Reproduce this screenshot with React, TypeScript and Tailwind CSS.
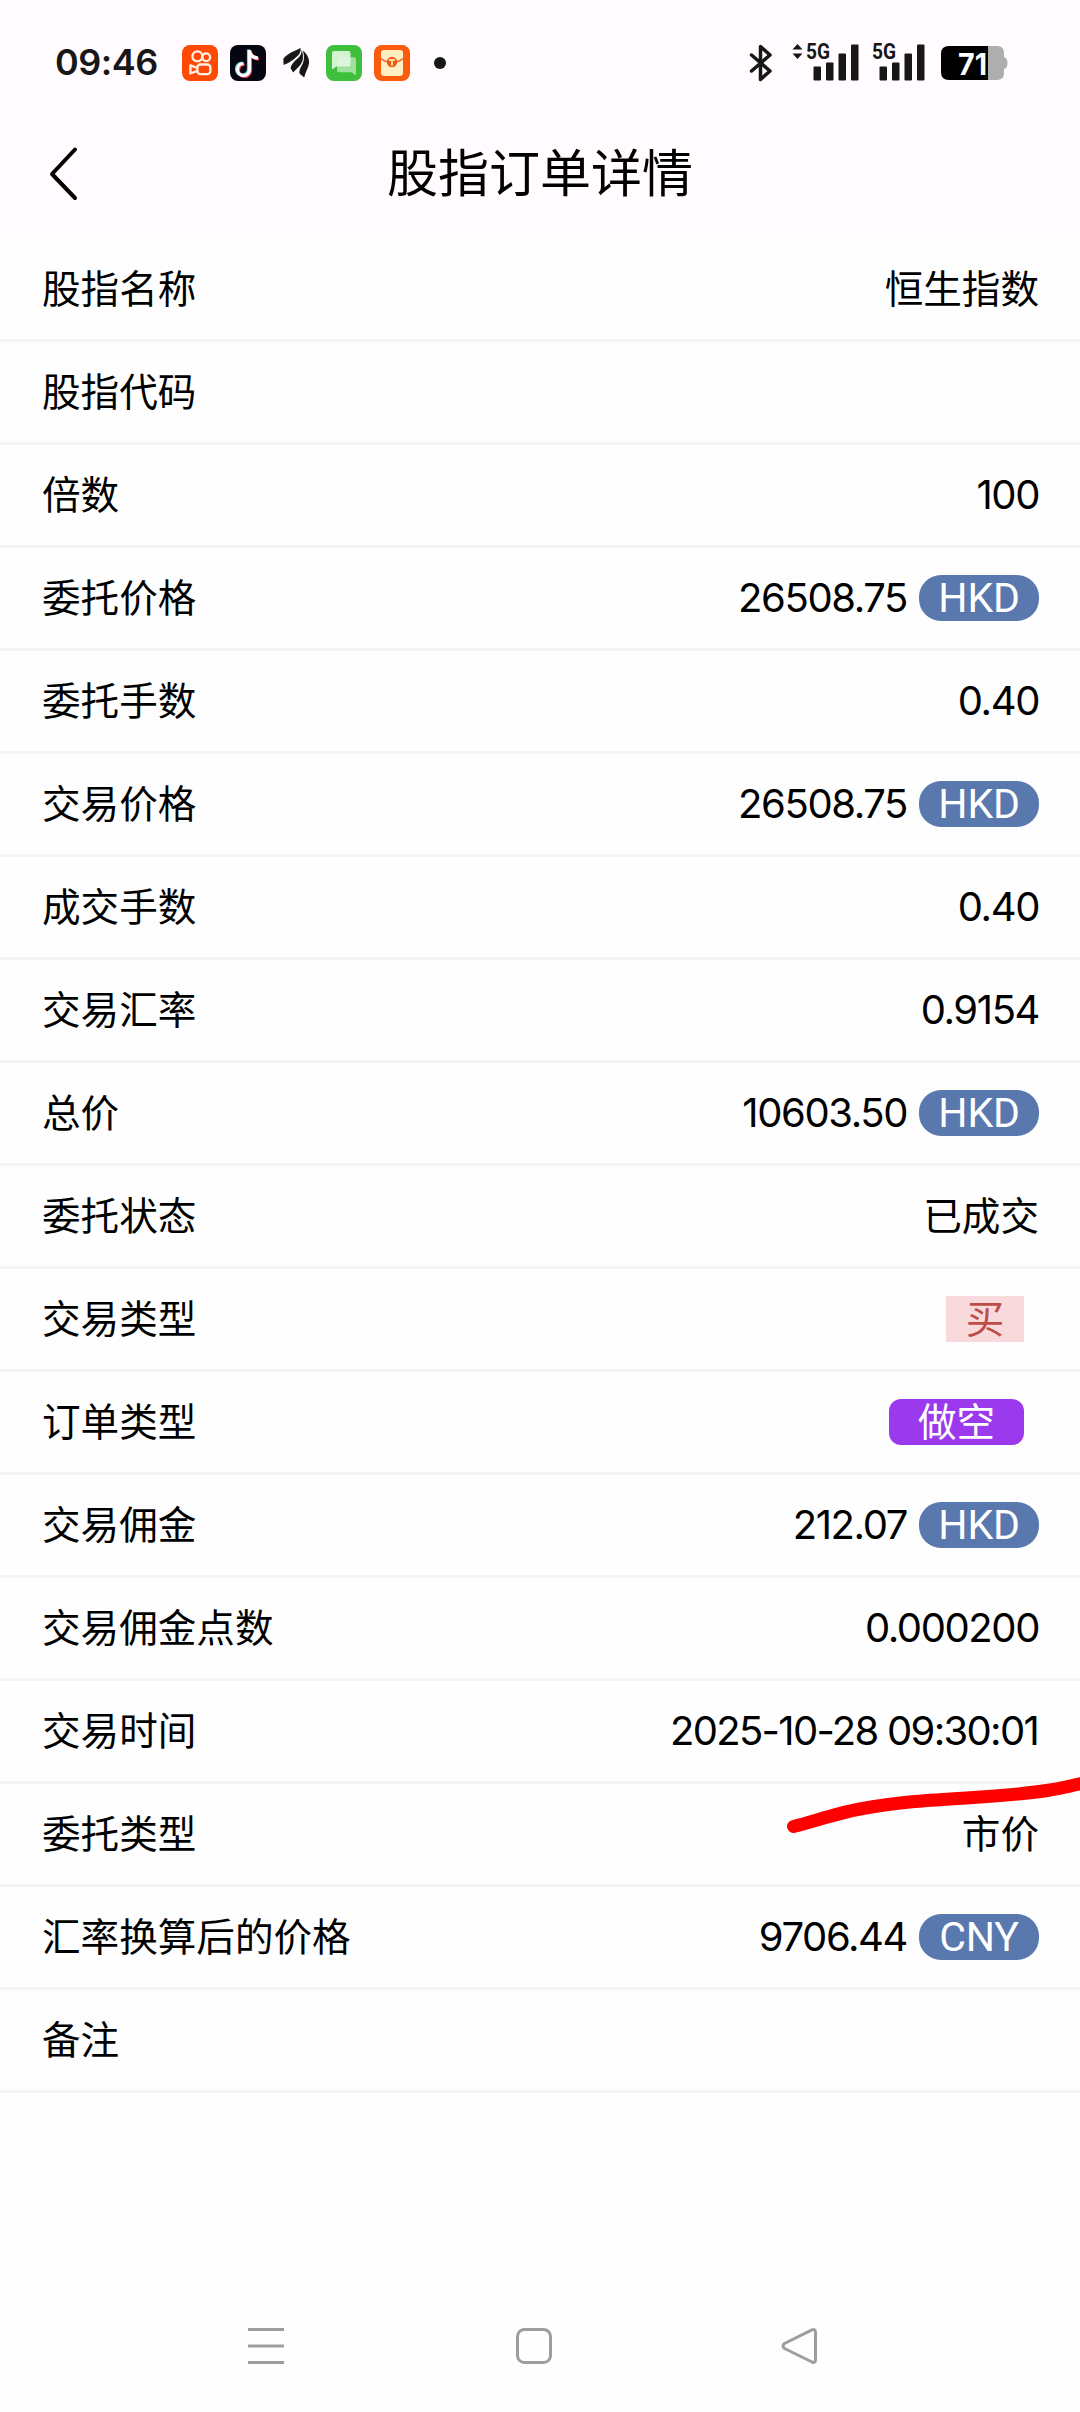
import clsx from 'clsx'
import type { ReactNode } from 'react'

type Row = {
  label: string
  value?: string
  currency?: string
  tag?: 'buy' | 'short'
}

const rows: Row[] = [
  { label: '股指名称', value: '恒生指数' },
  { label: '股指代码' },
  { label: '倍数', value: '100' },
  { label: '委托价格', value: '26508.75', currency: 'HKD' },
  { label: '委托手数', value: '0.40' },
  { label: '交易价格', value: '26508.75', currency: 'HKD' },
  { label: '成交手数', value: '0.40' },
  { label: '交易汇率', value: '0.9154' },
  { label: '总价', value: '10603.50', currency: 'HKD' },
  { label: '委托状态', value: '已成交' },
  { label: '交易类型', value: '买', tag: 'buy' },
  { label: '订单类型', value: '做空', tag: 'short' },
  { label: '交易佣金', value: '212.07', currency: 'HKD' },
  { label: '交易佣金点数', value: '0.000200' },
  { label: '交易时间', value: '2025-10-28 09:30:01' },
  { label: '委托类型', value: '市价' },
  { label: '汇率换算后的价格', value: '9706.44', currency: 'CNY' },
  { label: '备注' },
]

const Signal = ({ arrows }: { arrows?: boolean }) => (
  <svg width="68" height="52" viewBox="0 -7 68 52" fill="#171717">
    {arrows && <path d="M6.5 0l5 5.5h-10zM6.5 15l5-5.5h-10z" />}
    <text
      x="15"
      y="15"
      fontSize="22"
      fontWeight="700"
      fontFamily="Roboto, sans-serif"
      textLength="24"
      lengthAdjust="spacingAndGlyphs"
    >
      5G
    </text>
    <rect x="22.500" y="22.500" width="7.5" height="14" rx="1" />
    <rect x="35" y="18.500" width="7.5" height="18" rx="1" />
    <rect x="47.500" y="9.500" width="7.5" height="27" rx="1" />
    <rect x="60" y=".5" width="7.5" height="36" rx="1" />
  </svg>
)

const StatusBar = () => (
  <div className="flex h-[125px] items-center justify-between pr-[72px] pl-[55px]">
    <div className="flex items-center">
      <span className="w-[127px] pb-0.5 font-[Inter] text-[36px] leading-none font-semibold tracking-[-0.5px] text-[#171717]">
        09:46
      </span>
      <div className="flex items-center gap-3">
        <svg width="36" height="36" viewBox="0 0 36 36">
          <rect width="36" height="36" rx="8" fill="#ff4a06" />
          <g fill="none" stroke="#fff1e4" strokeWidth="2.3">
            <circle cx="15.4" cy="11.3" r="5" />
            <circle cx="24.2" cy="12.2" r="3.9" />
            <rect x="15.4" y="19.5" width="13" height="9.6" rx="3" />
            <path d="M15.4 23l-7-2.6v8l7-2.4" strokeLinejoin="round" />
          </g>
        </svg>
        <svg width="36" height="36" viewBox="0 0 36 36" fill="none" strokeWidth="3.2">
          <rect width="36" height="36" rx="8" fill="#050611" />
          <path d="M18.5 4.5v20a6 6 0 1 1-6-6.500M18.5 6c1 4 4 6.3 8.5 6.5" stroke="#4fe5e3" />
          <path d="M20.5 6v20a6 6 0 1 1-6-6.500M20.5 7.5c1 4 4 6.3 8.5 6.5" stroke="#f3405f" />
          <path d="M19.5 5v20a6 6 0 1 1-6-6.500M19.5 6.5c1 4 4 6.3 8.5 6.5" stroke="#fff" />
        </svg>
        <svg width="36" height="36" viewBox="0 0 36 36" fill="#171717">
          <path d="M22.5 3C16 6.500 9 8.500 5.300 14l.3 6C10 18.500 16 14.500 19.500 11c2.500-2.400 3.500-5 3-8z" />
          <path d="M23.500 4.500c.6 4-1.500 7-4.500 9.500-3 2.800-6 5.500-6.300 9.500l2.500 4C18 24 22.500 21 24.300 16.500c1.300-4 .7-8-.8-12z" />
          <path d="M24.800 5.500c5 4 7 9 6 14-1 4.500-3.500 8-4.600 13L21.500 28.500c-.6-4 2-7 3.500-10.500 1.400-4 1.300-8-.2-12.500z" />
        </svg>
        <svg width="36" height="36" viewBox="0 0 36 36">
          <rect width="36" height="36" rx="8" fill="#3fc03c" />
          <path d="M13 12.200h15a2 2 0 0 1 2 2v16l-4.500-3H13a2 2 0 0 1-2-2v-11a2 2 0 0 1 2-2z" fill="#a3e09f" />
          <path d="M8 6h14.500a2 2 0 0 1 2 2v11.500a2 2 0 0 1-2 2H10.500L6 24.500V8a2 2 0 0 1 2-2z" fill="#e3f8e1" fillOpacity=".9" />
        </svg>
        <svg width="36" height="36" viewBox="0 0 36 36">
          <rect width="36" height="36" rx="8" fill="#fb5b0c" />
          <rect x="7" y="5" width="22" height="26" rx="3" fill="#ffeec2" />
          <path d="M7 13.500c2 1.800 4 2.800 6.500 3.500M29 13.500c-2 1.800-4 2.800-6.500 3.500" fill="none" stroke="#ef5c18" strokeWidth="1.300" />
          <circle cx="18" cy="17" r="5.200" fill="#ef5c18" />
          <path d="M15 14.800h6M18 14.800v6" stroke="#ffe2b0" strokeWidth="1.800" />
        </svg>
      </div>
      <div className="ml-6 size-3 rounded-full bg-[#171717]" />
    </div>
    <div className="flex items-center">
      <svg width="24" height="38" viewBox="0 0 24 38" fill="none" stroke="#171717" strokeWidth="3.500" strokeLinejoin="round" strokeLinecap="round">
        <path d="M2.500 11L21 27 11.500 35.500V2.500L21 11 2.500 27" />
      </svg>
      <div className="ml-[18px]">
        <Signal arrows />
      </div>
      <div className="-ml-0.5">
        <Signal />
      </div>
      <svg className="ml-4" width="67" height="34" viewBox="0 0 67 34">
        <path d="M47 0h9q7 0 7 7v4q3.500 1 3.500 6t-3.500 6v4q0 7-7 7h-9z" fill="#aeaeae" />
        <path d="M47 0H8Q0 0 0 8v18q0 8 8 8h39z" />
        <text x="17" y="28.500" fontSize="30" fontWeight="700" fontFamily="Inter, sans-serif" textLength="29" lengthAdjust="spacingAndGlyphs" fill="#fff">
          71
        </text>
      </svg>
    </div>
  </div>
)

const Header = () => (
  <div className="grid h-[114px] grid-cols-[1fr_auto_1fr] items-center px-[46px] pb-[18px]">
    <svg width="32" height="56" viewBox="0 0 32 56" fill="none" stroke="#000" strokeWidth="4" strokeLinecap="round" strokeLinejoin="round">
      <path d="M29 4.500L6 29l23 24" />
    </svg>
    <h1 className="text-[51px] leading-none">股指订单详情</h1>
  </div>
)

const Badge = ({ className, children }: { className: string; children: ReactNode }) => (
  <span className={clsx('flex h-[46px] items-center justify-center', className)}>{children}</span>
)

const Value = ({ value, currency, tag }: Row) => {
  if (!value) return null
  if (tag === 'buy') {
    return <Badge className="mr-[15px] w-[78px] bg-[#f8d9dc] text-[#bf4c47]">{value}</Badge>
  }
  if (tag === 'short') {
    return <Badge className="mr-[15px] w-[135px] rounded-xl bg-[#9b3aec] text-white">{value}</Badge>
  }
  const isNumber = /^[\d.]+$/.test(value)
  const isDate = value.includes(':')
  return (
    <div className="flex items-center">
      <span
        className={clsx(
          isNumber && 'text-[40px] tracking-[-1.4px]',
          isDate && 'pr-px text-[40px] tracking-[-1.7px]'
        )}
      >
        {value}
      </span>
      {currency && (
        <Badge className="ml-[12px] w-[120px] rounded-[22px] bg-[#5978ae] font-[Roboto] text-[41px] tracking-[-0.2px] text-white">
          {currency}
        </Badge>
      )}
    </div>
  )
}

const NavBar = () => (
  <div className="flex justify-between pr-[260px] pb-[46px] pl-[246px]">
    <svg width="40" height="40" viewBox="0 0 40 40" stroke="#9d9d9d" strokeWidth="3">
      <path d="M2 3.500h36M2 20h36M2 36.500h36" />
    </svg>
    <svg className="ml-0.5" width="40" height="40" viewBox="0 0 40 40" fill="none" stroke="#9d9d9d" strokeWidth="3">
      <rect x="3.500" y="3.500" width="33" height="33" rx="7" />
    </svg>
    <svg width="40" height="40" viewBox="0 0 40 40" fill="none" stroke="#9d9d9d" strokeWidth="3" strokeLinejoin="round">
      <path d="M4.500 17.500L32 3.800Q35.500 2.500 35.500 6.500v27q0 4-3.500 2.500L4.500 22.500Q1.500 20 4.500 17.500z" />
    </svg>
  </div>
)

export default function App() {
  return (
    <div className="relative flex h-[2412px] w-[1080px] flex-col overflow-hidden bg-[#fefefe] font-[Inter,'Noto_Sans_CJK_SC',sans-serif] text-black">
      <div className="bg-[#fffbff]">
        <StatusBar />
        <Header />
      </div>
      <div className="flex-1">
        {rows.map((row) => (
          <div
            key={row.label}
            className="flex h-[103px] items-center justify-between border-b-3 border-[#f6f4f6] pr-[41px] pl-[42px] text-[38.6px] leading-none"
          >
            <span>{row.label}</span>
            <Value {...row} />
          </div>
        ))}
      </div>
      <NavBar />
      {/* red marker stroke under the trade time */}
      <svg className="absolute top-[1770px] left-[780px]" width="300" height="70" viewBox="0 0 300 70" fill="none" stroke="#fe0000" strokeWidth="13" strokeLinecap="round">
        <path d="M13.500 56.500C35 51 58 43 80 39c70-13 130-9 190-19 12-2 24-5 40-8" />
      </svg>
    </div>
  )
}
